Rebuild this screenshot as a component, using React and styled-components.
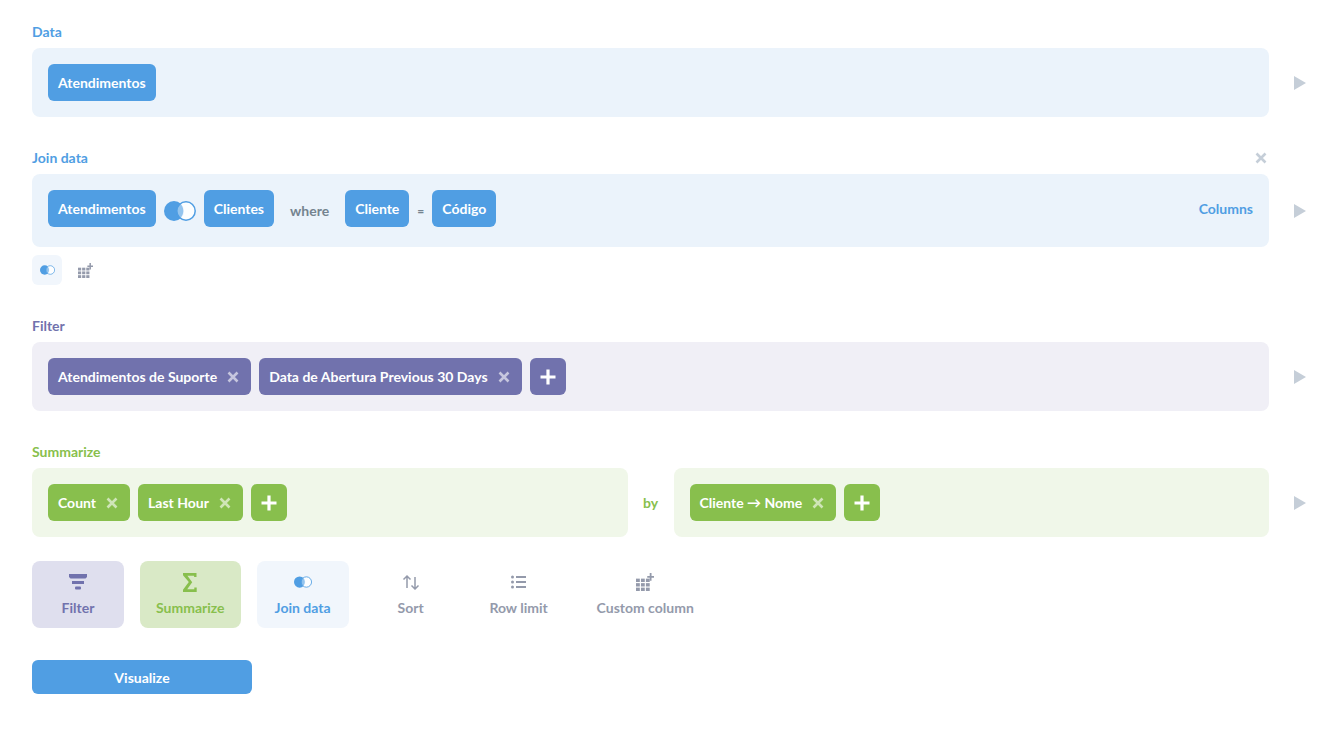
import React from 'react'
import styled, { createGlobalStyle } from 'styled-components'

const BLUE = '#509ee3'
const PURPLE = '#7172ad'
const GREEN = '#88bf4d'

const Global = createGlobalStyle`
  html, body { margin: 0; padding: 0; background: #fff; }
  body { font-family: Lato, "Noto Sans", sans-serif; -webkit-font-smoothing: antialiased; }
`

const Page = styled.div`
  width: 1340px;
  height: 746px;
  box-sizing: border-box;
  padding: 23px 0 0 32px;
  overflow: hidden;
`
const Step = styled.section`
  margin-bottom: ${(p) => p.$mb ?? 32}px;
`
const StepHead = styled.div`
  width: 1237px;
  height: 17px;
  margin-bottom: 8px;
  display: flex;
  align-items: center;
  justify-content: space-between;
`
const Label = styled.div`
  font-size: 14px;
  line-height: 17px;
  font-weight: 700;
  color: ${(p) => p.$color};
`
const CloseMark = styled.svg`
  width: 12px;
  height: 12px;
  margin-right: 2px;
  display: block;
`
const StepRow = styled.div`
  display: flex;
  align-items: center;
`
const Cards = styled.div`
  width: 1237px;
  display: flex;
  align-items: stretch;
`
const Card = styled.div`
  flex: 1;
  min-width: 0;
  box-sizing: border-box;
  padding: 16px 16px ${(p) => p.$pb ?? 16}px;
  border-radius: 8px;
  background: ${(p) => p.$bg};
  display: flex;
  align-items: flex-start;
  gap: 8px;
`
const By = styled.div`
  width: 46px;
  flex: none;
  align-self: center;
  text-align: center;
  font-size: 14px;
  font-weight: 700;
  color: ${GREEN};
`
const Play = styled.svg`
  width: 12px;
  height: 14px;
  margin-left: 25px;
  flex: none;
  display: block;
`
const Pill = styled.div`
  height: 37px;
  box-sizing: border-box;
  padding: 0 ${(p) => (p.$removable ? 12 : 10)}px 0 10px;
  border-radius: 6px;
  background: ${(p) => p.$bg};
  color: #fff;
  font-size: 14px;
  font-weight: 700;
  white-space: nowrap;
  display: flex;
  align-items: center;
`
const PillClose = styled.svg`
  width: 12px;
  height: 12px;
  margin-left: 10px;
  display: block;
`
const PlusButton = styled.div`
  width: 36px;
  height: 37px;
  border-radius: 6px;
  background: ${(p) => p.$bg};
  display: flex;
  align-items: center;
  justify-content: center;
`
const JoinMark = styled.svg`
  display: block;
  flex: none;
`
const JoinSlot = styled.div`
  height: 37px;
  display: flex;
  align-items: center;
  padding-top: 4px;
  box-sizing: border-box;
`
const Word = styled.div`
  height: 37px;
  padding-top: 4px;
  box-sizing: border-box;
  margin: ${(p) => p.$margin};
  display: flex;
  align-items: center;
  color: #74838f;
  font-size: ${(p) => p.$size ?? 14}px;
  font-weight: 700;
`
const ColumnsLink = styled.div`
  margin-left: auto;
  height: 37px;
  display: flex;
  align-items: center;
  color: ${BLUE};
  font-size: 14px;
  font-weight: 700;
`
const SubActions = styled.div`
  display: flex;
  gap: 0;
  margin-top: 8px;
`
const SubAction = styled.div`
  width: 30px;
  height: 30px;
  margin-right: 8px;
  border-radius: 6px;
  background: ${(p) => p.$bg ?? 'transparent'};
  display: flex;
  align-items: center;
  justify-content: center;
`
const Actions = styled.div`
  display: flex;
  gap: 16px;
  margin-bottom: 32px;
`
const Action = styled.div`
  min-width: 60px;
  height: 67px;
  padding: 0 16px;
  border-radius: 8px;
  background: ${(p) => p.$bg ?? 'transparent'};
  color: ${(p) => p.$color};
  font-size: 14px;
  font-weight: 700;
  display: flex;
  flex-direction: column;
  align-items: center;
`
const ActionIcon = styled.div`
  height: 22px;
  margin-top: 10px;
  margin-bottom: 4px;
  display: flex;
  align-items: center;
  justify-content: center;
`
const ActionText = styled.div`
  line-height: 22px;
  white-space: nowrap;
`
const Visualize = styled.button`
  width: 220px;
  height: 34px;
  border: 0;
  padding: 0;
  border-radius: 6px;
  background: ${BLUE};
  color: #fff;
  font-family: inherit;
  font-size: 14px;
  font-weight: 700;
`

const Cross = ({ color = '#fff', opacity = 0.6, as: Comp = PillClose }) => (
  <Comp viewBox="0 0 12 12">
    <path d="M1.5 1.5l9 9M10.5 1.5l-9 9" stroke={color} strokeOpacity={opacity} strokeWidth="2.6" />
  </Comp>
)

const PlayIcon = () => (
  <Play viewBox="0 0 12 14">
    <path d="M0 0l12 7-12 7z" fill="#c5ced8" />
  </Play>
)

const Plus = () => (
  <svg width="16" height="16" viewBox="0 0 16 16">
    <path d="M8 0.5v15M0.5 8h15" stroke="#fff" strokeWidth="3.2" />
  </svg>
)

// two rings, the left one filled, same drawing at every size
const JoinIcon = ({ w, h }) => (
  <JoinMark width={w} height={h} viewBox="0 0 32 20">
    <circle cx="10" cy="10" r="10" fill={BLUE} />
    <circle cx="22" cy="10" r="9.2" fill="#fff" fillOpacity="0.85" stroke={BLUE} strokeWidth="1.5" />
    <path d="M16 2.6a10 10 0 0 1 0 14.8a9.2 9.2 0 0 1 0-14.8z" fill={BLUE} fillOpacity="0.55" />
  </JoinMark>
)

const GridPlus = ({ color = '#949aab', size = 16 }) => (
  <svg width={size} height={size} viewBox="0 0 16 16" fill={color}>
    <rect x="0" y="5" width="3.4" height="3" />
    <rect x="4.4" y="5" width="3.4" height="3" />
    <rect x="8.8" y="5" width="3.4" height="3" />
    <rect x="0" y="9" width="3.4" height="3" />
    <rect x="4.4" y="9" width="3.4" height="3" />
    <rect x="8.8" y="9" width="3.4" height="3" />
    <rect x="0" y="13" width="3.4" height="3" />
    <rect x="4.4" y="13" width="3.4" height="3" />
    <rect x="8.8" y="13" width="3.4" height="3" />
    <path d="M12.2 0h1.6v2.6h2.2v1.6h-2.2v2.6h-1.6v-2.6h-2.2v-1.6h2.2z" />
  </svg>
)

const FilterIcon = () => (
  <svg width="18" height="16" viewBox="0 0 18 16" fill={PURPLE}>
    <path d="M0 0h18v3l-1.5 1.6h-15L0 3z" />
    <rect x="3" y="7" width="12" height="3" />
    <rect x="6" y="12.4" width="6" height="3" rx="1" />
  </svg>
)

const SigmaIcon = () => (
  <svg width="14" height="19" viewBox="0 0 14 19" fill={GREEN}>
    <path d="M0 0h13.5v4h-2.4v-1.300H4.400l4.800 6.500-5 7h7.100v-1.700h2.400v4.500H0v-2.200l5.800-7.800L0 2.200z" />
  </svg>
)

const SortIcon = () => (
  <svg width="18" height="16" viewBox="0 0 18 16" fill="none" stroke="#949aab" strokeWidth="1.500">
    <path d="M5 14V2M1.500 5.500L5 2l3.500 3.500" />
    <path d="M13 3v12M9.500 11.500L13 15l3.500-3.500" />
  </svg>
)

const ListIcon = () => (
  <svg width="15" height="14" viewBox="0 0 15 14" fill="#949aab">
    <rect x="0" y="0.500" width="3" height="3" rx="1.500" />
    <rect x="0" y="5.500" width="3" height="3" rx="1.500" />
    <rect x="0" y="10.500" width="3" height="3" rx="1.500" />
    <rect x="5" y="1" width="10" height="2" />
    <rect x="5" y="6" width="10" height="2" />
    <rect x="5" y="11" width="10" height="2" />
  </svg>
)

const RemovablePill = ({ bg, children }) => (
  <Pill $bg={bg} $removable>
    {children}
    <Cross />
  </Pill>
)

const App = () => (
  <Page>
    <Global />

    <Step>
      <StepHead>
        <Label $color={BLUE}>Data</Label>
      </StepHead>
      <StepRow>
        <Cards>
          <Card $bg="#ebf3fb">
            <Pill $bg={BLUE}>Atendimentos</Pill>
          </Card>
        </Cards>
        <PlayIcon />
      </StepRow>
    </Step>

    <Step>
      <StepHead>
        <Label $color={BLUE}>Join data</Label>
        <Cross color="#c5ced8" opacity={1} as={CloseMark} />
      </StepHead>
      <StepRow>
        <Cards>
          <Card $bg="#ebf3fb" $pb={20}>
            <Pill $bg={BLUE}>Atendimentos</Pill>
            <JoinSlot>
              <JoinIcon w={32} h={20} />
            </JoinSlot>
            <Pill $bg={BLUE}>Clientes</Pill>
            <Word $margin="0 8px 0 8px">where</Word>
            <Pill $bg={BLUE}>Cliente</Pill>
            <Word $size={12} $margin="0 0 0 0">=</Word>
            <Pill $bg={BLUE}>Código</Pill>
            <ColumnsLink>Columns</ColumnsLink>
          </Card>
        </Cards>
        <PlayIcon />
      </StepRow>
      <SubActions>
        <SubAction $bg="#f1f6fc">
          <JoinIcon w={15} h={10} />
        </SubAction>
        <SubAction>
          <GridPlus size={15} />
        </SubAction>
      </SubActions>
    </Step>

    <Step>
      <StepHead>
        <Label $color={PURPLE}>Filter</Label>
      </StepHead>
      <StepRow>
        <Cards>
          <Card $bg="#f0eff6">
            <RemovablePill bg={PURPLE}>Atendimentos de Suporte</RemovablePill>
            <RemovablePill bg={PURPLE}>Data de Abertura Previous 30 Days</RemovablePill>
            <PlusButton $bg={PURPLE}>
              <Plus />
            </PlusButton>
          </Card>
        </Cards>
        <PlayIcon />
      </StepRow>
    </Step>

    <Step $mb={24}>
      <StepHead>
        <Label $color={GREEN}>Summarize</Label>
      </StepHead>
      <StepRow>
        <Cards>
          <Card $bg="#f0f7e9">
            <RemovablePill bg={GREEN}>Count</RemovablePill>
            <RemovablePill bg={GREEN}>Last Hour</RemovablePill>
            <PlusButton $bg={GREEN}>
              <Plus />
            </PlusButton>
          </Card>
          <By>by</By>
          <Card $bg="#f0f7e9">
            <RemovablePill bg={GREEN}>Cliente → Nome</RemovablePill>
            <PlusButton $bg={GREEN}>
              <Plus />
            </PlusButton>
          </Card>
        </Cards>
        <PlayIcon />
      </StepRow>
    </Step>

    <Actions>
      <Action $bg="#dfdfee" $color={PURPLE}>
        <ActionIcon><FilterIcon /></ActionIcon>
        <ActionText>Filter</ActionText>
      </Action>
      <Action $bg="#d9e9c6" $color={GREEN}>
        <ActionIcon><SigmaIcon /></ActionIcon>
        <ActionText>Summarize</ActionText>
      </Action>
      <Action $bg="#f1f6fc" $color={BLUE}>
        <ActionIcon><JoinIcon w={18} h={12} /></ActionIcon>
        <ActionText>Join data</ActionText>
      </Action>
      <Action $color="#949aab">
        <ActionIcon><SortIcon /></ActionIcon>
        <ActionText>Sort</ActionText>
      </Action>
      <Action $color="#949aab">
        <ActionIcon><ListIcon /></ActionIcon>
        <ActionText>Row limit</ActionText>
      </Action>
      <Action $color="#949aab">
        <ActionIcon><GridPlus size={18} /></ActionIcon>
        <ActionText>Custom column</ActionText>
      </Action>
    </Actions>

    <Visualize>Visualize</Visualize>
  </Page>
)

export default App
